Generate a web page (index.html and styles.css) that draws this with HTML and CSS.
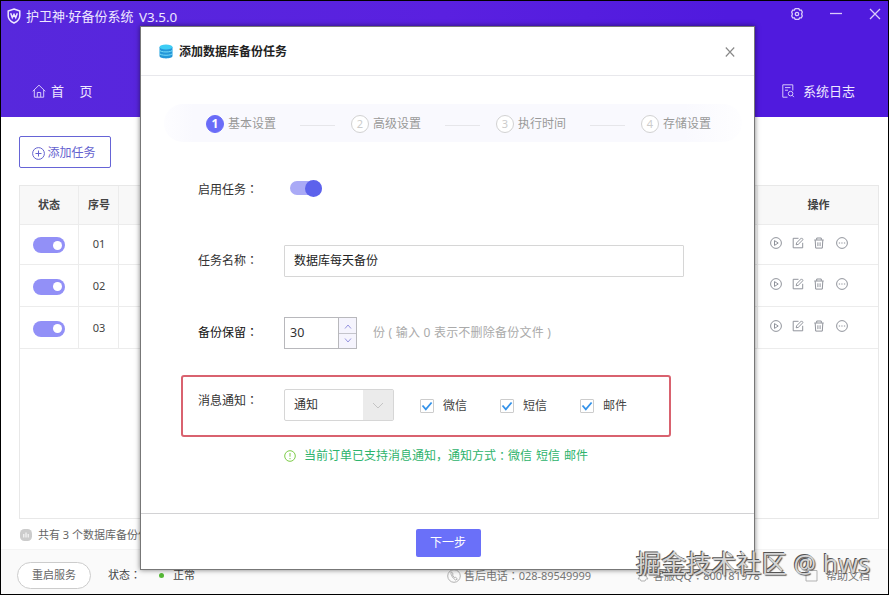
FILE: index.html
```html
<!DOCTYPE html>
<html lang="zh-CN">
<head>
<meta charset="utf-8">
<title>护卫神·好备份系统</title>
<link rel="stylesheet" href="styles.css">
</head>
<body>
<svg class="defs" width="0" height="0">
  <symbol id="play" viewBox="0 0 12 12"><circle cx="6" cy="6" r="5.4"/><path d="M4.5 3.6v4.8L8.2 6z"/></symbol>
  <symbol id="edit" viewBox="0 0 12 12"><path d="M6.5 1.3H1.2v9.5h9.5V5.8M4.2 7.8l.4-2L9.5.9l1.6 1.6-4.9 4.9z"/></symbol>
  <symbol id="trash" viewBox="0 0 12 12"><path d="M1.3 3h9.4M3.7 2.8V1h4.6v1.8M2.2 3.2l.5 7.9h6.6l.5-7.9M4.9 5.3v3.8M7.1 5.3v3.8"/></symbol>
  <symbol id="more" viewBox="0 0 12 12"><circle cx="6" cy="6" r="5.4"/><path d="M2.8 6h1.3M5.3 6h1.3M7.9 6h1.3"/></symbol>
  <symbol id="tick" viewBox="0 0 12 12"><path d="M1.500 5.500l3.300 3.800L10.600 2.500"/></symbol>
</svg>
<div class="window">
  <header class="top">
    <div class="titlebar">
      <svg class="logo" viewBox="0 0 14 16"><path d="M7 1l5.8 2v4.7c0 3.3-2.4 5.7-5.8 7.3C3.600 13.400 1.200 11 1.200 7.700V3z"/><path d="M3.700 5.300l1.600 4.400L7 6.400l1.700 3.300 1.600-4.400"/></svg>
      <span class="app-name">护卫神·好备份系统</span><span class="version">V3.5.0</span>
      <div class="controls">
        <svg width="12" height="12" viewBox="0 0 12 12"><path d="M4.200.7h3.600l.8 1.400h1.700l1 1.900-.7 2 .7 2-1 1.900H8.600l-.8 1.400H4.200l-.8-1.400H1.700L.7 8l.7-2-.7-2 1-1.900h1.700z"/><circle cx="6" cy="6" r="1.700"/></svg>
        <svg width="12" height="12" viewBox="0 0 12 12"><path d="M0 5.500h12"/></svg>
        <svg width="12" height="12" viewBox="0 0 12 12"><path d="M1 1l10 10M11 1L1 11"/></svg>
      </div>
    </div>
    <nav class="nav">
      <a class="nav-item"><svg width="14" height="14" viewBox="0 0 14 14"><path d="M.7 7.300L7 1.200l6.300 6.100M2.300 6v7.200h9.400V6M5.300 13V8.500h3.400V13"/></svg><span class="home-text">首 页</span></a>
      <a class="nav-item"><svg width="14" height="14" viewBox="0 0 14 14"><path d="M6.500 13.200H1.800V.8h10v5.700M4 3.600h5.500M4 6.200h3"/><circle cx="9.600" cy="9.600" r="2.300"/><path d="M11.200 11.300l1.700 1.800"/></svg><span>系统日志</span></a>
    </nav>
  </header>
  <main class="main">
    <button class="add"><svg width="13" height="13" viewBox="0 0 13 13"><circle cx="6.500" cy="6.500" r="5.900"/><path d="M6.500 3.500v6M3.500 6.500h6"/></svg>添加任务</button>
    <div class="table">
      <div class="tr th"><span>状态</span><span>序号</span><span></span><span class="op-title">操作</span></div>
      <div class="tr"><span><i class="switch"></i></span><span>01</span><span></span><span class="ops"><svg><use href="#play"/></svg><svg><use href="#edit"/></svg><svg><use href="#trash"/></svg><svg><use href="#more"/></svg></span></div>
      <div class="tr"><span><i class="switch"></i></span><span>02</span><span></span><span class="ops"><svg><use href="#play"/></svg><svg><use href="#edit"/></svg><svg><use href="#trash"/></svg><svg><use href="#more"/></svg></span></div>
      <div class="tr"><span><i class="switch"></i></span><span>03</span><span></span><span class="ops"><svg><use href="#play"/></svg><svg><use href="#edit"/></svg><svg><use href="#trash"/></svg><svg><use href="#more"/></svg></span></div>
    </div>
    <div class="summary"><svg width="12" height="12" viewBox="0 0 12 12"><rect width="12" height="12" rx="4.500"/><path d="M3.800 5v3.500M6 3.500v5M8.200 5v3.500"/></svg>共有 3 个数据库备份任务</div>
  </main>
  <footer class="status">
    <button class="restart">重启服务</button>
    <span class="state">状态<b class="colon">：</b></span><i class="dot"></i><span>正常</span>
    <span class="contact phone"><svg width="14" height="14" viewBox="0 0 14 14"><circle cx="7" cy="7" r="6.300"/><path d="M4.400 2.800c-1.500 1.400.8 6.300 4.300 8.300l1.600-1.200-1.600-1.600-1 .6L5.400 6l.8-1z"/></svg>售后电话<b class="colon">：</b>028-89549999</span>
    <span class="contact qq"><svg width="12" height="12" viewBox="0 0 12 12"><path d="M3 6V4.500C3 2 4.300.7 6 .7S9 2 9 4.500V6l2 3-1.700-.2L8 11H4L2.700 8.800 1 9z"/></svg>客服QQ<b class="colon">：</b>800181978</span>
    <span class="contact help"><svg width="13" height="13" viewBox="0 0 13 13"><path d="M1 1.500h11v10.500H1z"/></svg>帮助文档</span>
  </footer>
</div>

<section class="modal">
  <div class="modal-head">
    <svg width="14" height="15" viewBox="0 0 14 15"><path class="db-body" d="M.5 3v9c0 3.200 13 3.200 13 0V3z"/><ellipse class="db-top" cx="7" cy="3" rx="6.500" ry="2.600"/><path class="db-line" d="M.5 6c0 2.600 13 2.600 13 0M.5 9.300c0 2.600 13 2.600 13 0"/></svg>
    <h1>添加数据库备份任务</h1>
    <svg class="close" width="10" height="10" viewBox="0 0 10 10"><path d="M.8.5l8.400 9M9.200.5L.8 9.500"/></svg>
  </div>
  <div class="steps">
    <div class="step active"><i>1</i><span>基本设置</span></div><hr>
    <div class="step"><i>2</i><span>高级设置</span></div><hr>
    <div class="step"><i>3</i><span>执行时间</span></div><hr>
    <div class="step"><i>4</i><span>存储设置</span></div>
  </div>
  <div class="form">
    <div class="row enable"><label>启用任务<b class="colon">：</b></label><span class="toggle"></span></div>
    <div class="row"><label>任务名称<b class="colon">：</b></label><div class="input">数据库每天备份</div></div>
    <div class="row"><label class="dark">备份保留<b class="colon">：</b></label>
      <div class="number"><span>30</span><div class="spin"><svg viewBox="0 0 8 5"><path d="M1 4.500l3-3.500 3 3.500"/></svg><svg viewBox="0 0 8 5"><path d="M1 .5L4 4 7 .5"/></svg></div></div>
      <span class="note">份 ( 输入 0 表示不删除备份文件 )</span></div>
    <div class="row notify"><label>消息通知<b class="colon">：</b></label>
      <div class="select"><span>通知</span><div class="arrow"><svg width="12" height="7" viewBox="0 0 12 7"><path d="M1 1l5 5 5-5"/></svg></div></div>
      <div class="checks"><span><svg class="box"><use href="#tick"/></svg>微信</span><span><svg class="box"><use href="#tick"/></svg>短信</span><span><svg class="box"><use href="#tick"/></svg>邮件</span></div>
    </div>
    <div class="hint"><svg width="12" height="12" viewBox="0 0 12 12"><circle cx="6" cy="6" r="5.300"/><path d="M6 3v3.700M6 8v1.200"/></svg>当前订单已支持消息通知<span>，</span>通知方式<b class="colon">：</b>微信 短信 邮件</div>
  </div>
  <div class="modal-foot"><button>下一步</button></div>
</section>
<div class="watermark">掘金技术社区 @ hws</div>
</body>
</html>
```
FILE: styles.css
```css
* { box-sizing: border-box; }
body {
  margin: 0;
  width: 889px;
  height: 595px;
  overflow: hidden;
  position: relative;
  font: 12px/16px "Noto Sans", "Noto Sans CJK SC", sans-serif;
  text-spacing-trim: space-all;
  color: #444;
}
svg { fill: none; stroke: currentColor; flex: none; }
.defs { position: absolute; }
button { font: inherit; padding: 0; }
i { font-style: normal; }
.colon { display: inline-block; width: 1em; text-align: center; font-family: "Noto Sans CJK TC", sans-serif; font-weight: inherit; line-height: 1; }

.window {
  height: 595px;
  border: 1px solid #000;
  display: flex;
  flex-direction: column;
  background: #fff;
}
.top {
  height: 116px;
  flex: none;
  background: linear-gradient(90deg, #5728dc 0%, #5a20e0 50%, #501ade 82%, #501ade 100%);
  color: #eee8ff;
}
.titlebar { height: 30px; display: flex; align-items: center; padding: 0 7px 0 6px; font-size: 13.4px; }
.logo { width: 14px; height: 16px; margin-right: 5px; stroke-width: 1.5; }
.app-name { width: 108px; font-size: 13px; white-space: nowrap; }
.version { margin: 1px 0 0 5px; }
.controls { display: flex; gap: 27px; margin: -4px 0 0 auto; }
.controls svg { stroke-width: 1.3; color: #dacbfa; }
.nav { display: flex; justify-content: space-between; padding: 52px 33px 0 31px; font-size: 13px; }
.nav-item { display: flex; align-items: center; gap: 5px; }
.nav-item:last-child { gap: 8px; }
.nav-item svg { stroke-width: 1; color: #d6c8fa; }
.home-text { word-spacing: 12px; }

.main { flex: 1; padding: 19px 9px 0 18px; }
.add {
  width: 92px; height: 32px;
  display: flex; align-items: center; justify-content: center; gap: 2px;
  border: 1px solid #6664d6;
  border-radius: 2px;
  background: #fff;
  color: #6462cf;
  padding: 2px 2px 0 0;
}
.table { margin-top: 17px; width: 860px; height: 334px; border: 1px solid #e8e8e8; font-size: 11px; }
.tr { height: 42px; display: grid; grid-template-columns: 59px 40px 639px 1fr; border-bottom: 1px solid #ececec; }
.tr > span { display: flex; align-items: center; justify-content: center; border-right: 1px solid #ececec; padding-left: 1px; }
.tr > span:first-child { padding-left: 0; }
.tr > span:last-child { border-right: 0; }
.th { height: 39px; background: #f8f8f8; font-weight: 600; }
.tr.th > span { padding-bottom: 1px; }
.th + .tr { height: 40px; }
.th + .tr > span { padding-bottom: 1px; }
.switch { width: 32px; height: 16px; border-radius: 8px; background: #9290f7; display: flex; justify-content: flex-end; align-items: center; padding-right: 3px; margin-top: 2px; }
.switch::after { content: ""; width: 9px; height: 9px; border-radius: 50%; background: #fff; }
.tr .ops { justify-content: flex-start; gap: 10px; padding: 0 0 3px 12px; }
.tr.th + .tr .ops { padding-bottom: 4px; }
.ops svg { width: 12px; height: 12px; stroke: #858891; stroke-width: .9; }
.ops svg:nth-child(2) { margin-right: -1px; }
.ops svg:nth-child(3) { margin-right: 1px; }
.summary { display: flex; align-items: center; gap: 6px; margin-top: 8px; padding-left: 1px; font-size: 11px; color: #666; }
.summary svg rect { fill: #ccc; stroke: none; }
.summary svg path { stroke: #fff; }

.status { height: 45px; flex: none; display: flex; align-items: center; background: #fafafa; border-top: 1px solid #f4f4f4; padding: 6px 0 0 16px; font-size: 11px; }
.restart { width: 74px; height: 27px; border: 1px solid #ccc; border-radius: 14px; background: #fff; color: #666; }
.state { margin-left: 17px; }
.dot { width: 5px; height: 5px; border-radius: 50%; background: #55b936; margin: 0 9px 0 18px; }
.contact { display: flex; align-items: center; color: #777; padding-top: 1px; white-space: nowrap; }
.contact svg { color: #aaa; stroke-width: .9; margin-right: 3px; }
.phone { margin-left: 252px; width: 190px; letter-spacing: -.05px; }
.qq svg { margin-right: 4px; }
.qq { width: 168px; }
.help svg { margin-right: 8px; }

.modal {
  position: absolute;
  left: 140px; top: 26px;
  width: 615px; height: 544px;
  border: 1px solid #777;
  background: #fff;
  box-shadow: 0 0 5px rgba(0, 0, 0, .5);
  display: flex;
  flex-direction: column;
}
.modal-head { height: 49px; flex: none; display: flex; align-items: center; border-bottom: 1px solid #e8e8ec; padding: 1px 19px 0 18px; }
.db-body { fill: #2497d9; stroke: none; }
.db-top { fill: #3ecdf5; stroke: none; }
.db-line { stroke: #79dcf8; stroke-width: 1; }
h1 { margin: 0 auto 0 6px; font-size: 12px; line-height: 16px; color: #222; font-weight: 700; }
.close { color: #888; stroke-width: 1.1; }
.steps {
  height: 38px; flex: none;
  margin: 28px 12px 0 23px;
  padding: 2px 31px 0 42px;
  display: flex; align-items: center; justify-content: space-between;
  border-radius: 19px;
  background: linear-gradient(90deg, #fdfdff, #f9f9fe 5%, #f9f9fe 90%, #fefeff);
  color: #999;
}
.step { display: flex; align-items: center; gap: 4px; }
.step i { width: 18px; height: 18px; border: 1px solid #d2d2d2; border-radius: 50%; line-height: 16px; text-align: center; color: #ccc; background: #fff; font-size: 11px; }
.step.active i { background: #6a6cf8; border-color: #6a6cf8; color: #fff; font-weight: 700; font-size: 12px; }
hr { width: 35px; height: 1px; border: 0; background: #e6e6ea; margin: 3px -4px 0 4px; }
.form { flex: 1; padding: 31px 0 0 40px; }
.row { width: 490px; height: 32px; margin-bottom: 40px; padding-left: 17px; display: flex; align-items: center; }
label { width: 86px; flex: none; color: #333; white-space: nowrap; }
.dark { color: #111; }
.enable label { padding-top: 1px; }
.toggle { width: 32px; height: 14px; margin: 0 0 2px 6px; border-radius: 7px; background: #aaaaf6; display: flex; align-items: center; justify-content: flex-end; }
.toggle::after { content: ""; width: 17px; height: 17px; flex: none; border-radius: 50%; background: #5d62ec; }
.input { width: 400px; flex: none; height: 32px; border: 1px solid #d6d6d6; border-radius: 1px; padding: 7px 9px; color: #222; }
.number { width: 73px; height: 32px; border: 1px solid #b8b8bc; display: flex; }
.number span { flex: 1; padding: 7px 5px; font-size: 12.500px; color: #333; }
.spin { width: 18px; border-left: 1px solid #b8b8bc; background: linear-gradient(#c4c4cb, #c4c4cb) 0 50% / 100% 1px no-repeat #f5f4fd; display: grid; grid-template-rows: 1fr 1fr; place-items: center; color: #9694df; }
.spin svg { width: 8px; height: 5px; }
.spin svg:first-child { margin-top: 2px; }
.note { margin-left: 16px; color: #aaa; letter-spacing: .22px; }
.notify { height: 62px; margin: -14px 0 0; padding-left: 15px; border: 2px solid #d9626f; border-radius: 3px; padding-bottom: 2px; }
.notify label { padding-bottom: 9px; }
.select { width: 110px; height: 32px; border: 1px solid #d6d6d6; border-radius: 2px; display: flex; color: #333; }
.select span { flex: 1; padding: 7px 9px; }
.arrow { width: 30px; background: #ebebeb; display: flex; align-items: center; justify-content: center; color: #c4c4c4; }
.checks { display: flex; gap: 33px; margin: 2px 0 0 26px; }
.checks span { width: 47px; display: flex; align-items: center; gap: 9px; white-space: nowrap; }
.box { width: 14px; height: 14px; border: 1px solid #ccc; border-radius: 1px; color: #3492e9; stroke-width: 1.8; }
.hint { display: flex; align-items: center; margin: 11px 0 0 103px; color: #2db36c; white-space: pre; word-spacing: .8px; }
.hint svg { margin-right: 8px; color: #7dcc48; }
.modal-foot { height: 56px; flex: none; border-top: 1px solid #d2d2d4; padding: 15px 0 0 1px; text-align: center; }
.modal-foot button { width: 65px; height: 28px; border: 0; border-radius: 2px; background: #6a70f9; color: #fff; }

.watermark {
  position: absolute;
  left: 636px; top: 547px;
  font-size: 25px;
  line-height: 32px;
  letter-spacing: .15px;
  white-space: nowrap;
  color: #d4d4d4;
  text-shadow: -1px -1px 0 #555, 1px 1px 1px #555;
}
```
